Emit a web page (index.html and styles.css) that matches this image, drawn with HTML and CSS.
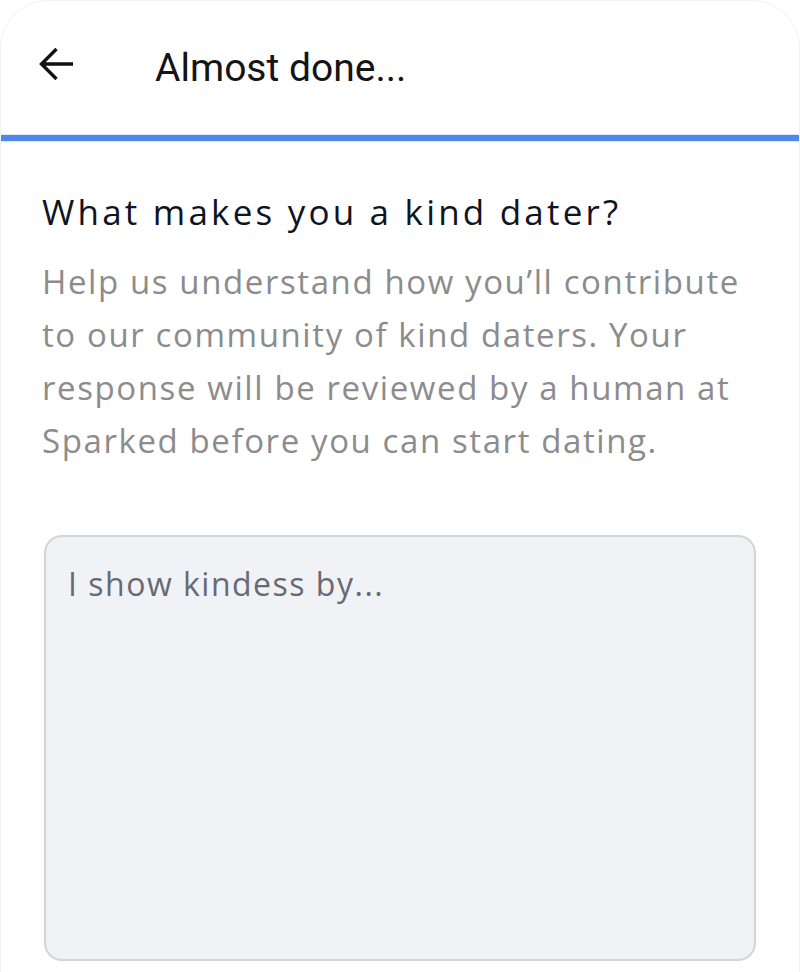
FILE: index.html
```html
<!DOCTYPE html>
<html>
<head>
<meta charset="utf-8">
<link rel="stylesheet" href="styles.css">
</head>
<body>
<div class="sheet">
  <header class="topbar">
    <button class="back" aria-label="Back">
      <svg width="40" height="40" viewBox="0 0 40 40"><path d="M35 17H3.5M18.5 2 3.5 17l15 15" fill="none" stroke="#111" stroke-width="3.4" stroke-linejoin="miter"/></svg>
    </button>
    <h1 class="title">Almost done...</h1>
  </header>
  <div class="progress"><div class="progress-fill"></div></div>
  <main class="content">
    <h2 class="question">What makes you a kind dater?</h2>
    <p class="help">Help us understand how you’ll contribute<br>to our community of kind daters. Your<br>response will be reviewed by a human at<br>Sparked before you can start dating.</p>
    <div class="field">
      <div class="placeholder">I show kindess by...</div>
    </div>
  </main>
</div>
</body>
</html>
```

FILE: styles.css
```css
html, body {
  margin: 0;
  padding: 0;
  background: #fff;
}
.sheet {
  width: 800px;
  height: 972px;
  overflow: hidden;
  box-sizing: border-box;
  border: 1px solid #f2f2f2;
  border-bottom: none;
  border-radius: 48px 48px 0 0;
}
.topbar {
  height: 133px;
  display: flex;
  align-items: center;
  box-sizing: border-box;
  padding-left: 37px;
}
.back {
  border: none;
  background: none;
  padding: 0;
  width: 40px;
  height: 40px;
  display: flex;
  margin-top: -1px;
}
.title {
  margin: 0 0 0 77px;
  font-family: Roboto, "Liberation Sans", sans-serif;
  font-weight: 400;
  font-size: 39px;
  color: #141414;
  letter-spacing: 0;
}
.progress {
  height: 8px;
  background: #d9e6fb;
  display: flex;
  align-items: center;
}
.progress-fill {
  width: 100%;
  height: 6px;
  background: #4f87ea;
}
.content {
  padding: 0 43px 0 41px;
  display: flex;
  flex-direction: column;
}
.question {
  margin: 48px 0 0 0;
  font-family: "Open Sans", "DejaVu Sans", sans-serif;
  font-weight: 500;
  font-size: 35px;
  letter-spacing: 3.2px;
  line-height: 44px;
  color: #0f1422;
}
.help {
  margin: 21px 0 0 0;
  font-family: "Open Sans", "DejaVu Sans", sans-serif;
  font-weight: 400;
  font-size: 33px;
  line-height: 53px;
  color: #8c8c8c;
  letter-spacing: 1.6px;
}
.field {
  margin: 68px 0 0 2px;
  height: 426px;
  box-sizing: border-box;
  border: 2px solid #d3d4d8;
  border-radius: 18px;
  background: #f1f2f6;
  padding: 25px 22px;
}
.placeholder {
  font-family: "Open Sans", "DejaVu Sans", sans-serif;
  font-size: 32px;
  line-height: 44px;
  letter-spacing: 1.5px;
  color: #676a72;
}
```
